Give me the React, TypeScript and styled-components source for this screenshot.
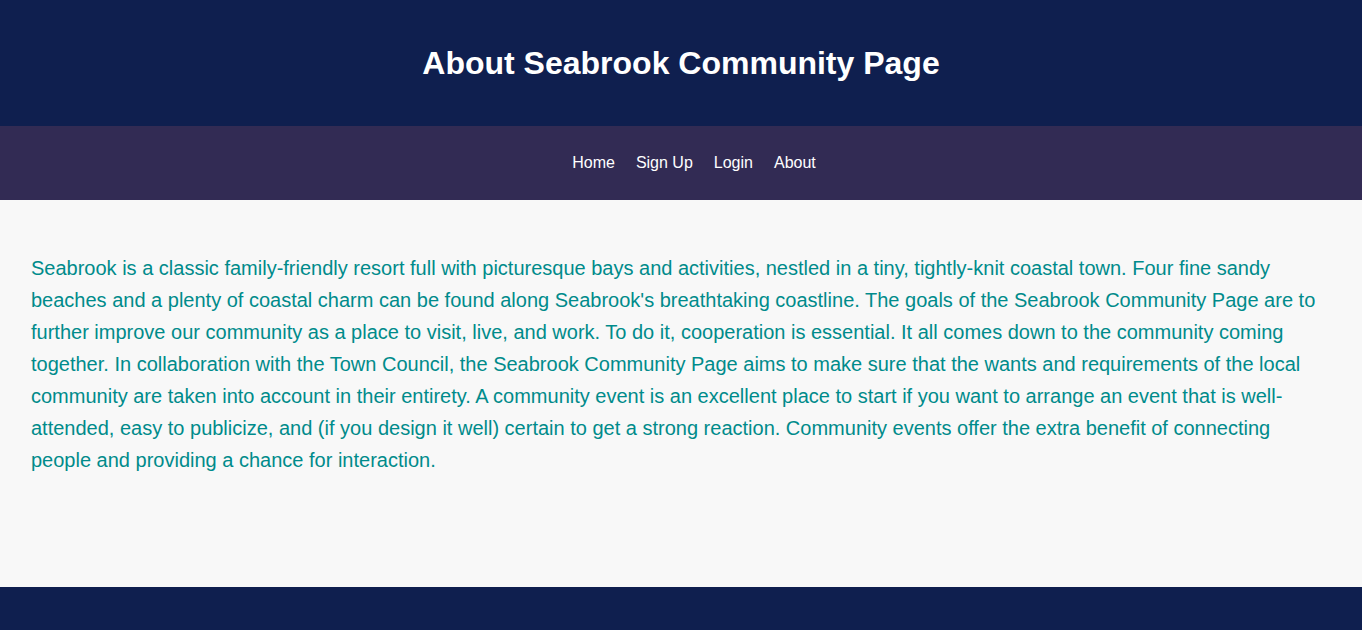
import React from "react";
import styled, { createGlobalStyle } from "styled-components";

const Global = createGlobalStyle`
  html, body { margin: 0; padding: 0; }
  body { font-family: "Liberation Sans", Arial, sans-serif; background: #f8f8f8; }
`;

const Header = styled.header`
  background: #0f1f4f;
  height: 126px;
  display: flex;
  align-items: center;
  justify-content: center;
`;

const Title = styled.h1`
  margin: 0;
  color: #ffffff;
  font-size: 32px;
  font-weight: 700;
`;

const Nav = styled.nav`
  background: #322b54;
  height: 74px;
  display: flex;
  align-items: center;
  justify-content: center;
  gap: 21px;
  padding-left: 26px;
`;

const NavLink = styled.a`
  color: #ffffff;
  text-decoration: none;
  font-size: 16px;
`;

const Main = styled.main`
  background: #f8f8f8;
  padding: 52px 31px 111px;
`;

const Paragraph = styled.p`
  margin: 0;
  color: #008b8b;
  font-size: 20px;
  line-height: 32px;
`;

const Footer = styled.footer`
  background: #0f1f4f;
  height: 43px;
`;

const links = ["Home", "Sign Up", "Login", "About"];

export default function App() {
  return (
    <>
      <Global />
      <Header>
        <Title>About Seabrook Community Page</Title>
      </Header>
      <Nav>
        {links.map((l) => (
          <NavLink key={l} href="#">{l}</NavLink>
        ))}
      </Nav>
      <Main>
        <Paragraph>
          Seabrook is a classic family-friendly resort full with picturesque bays and activities, nestled in a tiny, tightly-knit coastal town. Four fine sandy beaches and a plenty of coastal charm can be found along Seabrook's breathtaking coastline. The goals of the Seabrook Community Page are to further improve our community as a place to visit, live, and work. To do it, cooperation is essential. It all comes down to the community coming together. In collaboration with the Town Council, the Seabrook Community Page aims to make sure that the wants and requirements of the local community are taken into account in their entirety. A community event is an excellent place to start if you want to arrange an event that is well-attended, easy to publicize, and (if you design it well) certain to get a strong reaction. Community events offer the extra benefit of connecting people and providing a chance for interaction.
        </Paragraph>
      </Main>
      <Footer />
    </>
  );
}
